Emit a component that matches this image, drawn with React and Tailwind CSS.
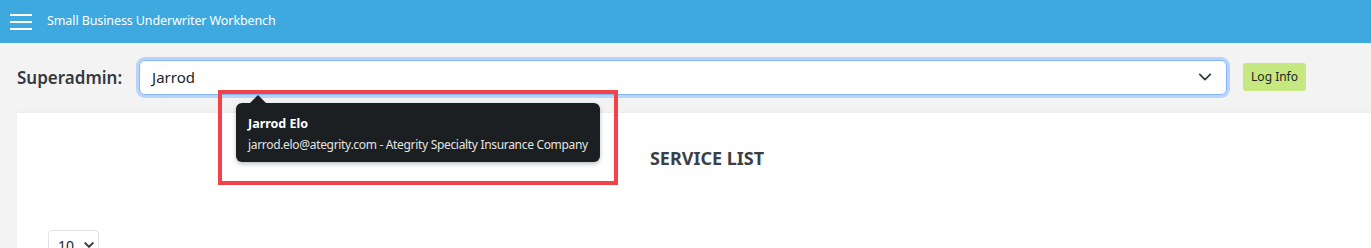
export default function App() {
  const font = { fontFamily: '"Segoe UI", "Noto Sans", "Open Sans", sans-serif' };
  return (
    <div className="w-[1371px] h-[248px] overflow-hidden bg-[#f3f3f3] relative" style={font}>
      <header className="h-[43px] bg-[#3da9de] flex items-center">
        <div className="ml-[10px] w-[22px] flex flex-col gap-[5px]">
          <span className="block h-[2px] bg-white" />
          <span className="block h-[2px] bg-white" />
          <span className="block h-[2px] bg-white" />
        </div>
        <span className="ml-[15px] text-[12.5px] tracking-[-0.1px] text-white leading-none">Small Business Underwriter Workbench</span>
      </header>

      <div className="flex items-center h-[70px] pb-[2px]">
        <label className="ml-[17px] text-[17px] font-semibold text-[#343a40] leading-none">Superadmin:</label>
        <div className="ml-[17px] w-[1088px] h-[35px] bg-white rounded-[6px] border border-[#86b7fe] shadow-[0_0_0_3px_#b9d4f8] flex items-center justify-between px-[12px]">
          <span className="text-[15px] text-[#212529]">Jarrod</span>
          <svg width="14" height="14" viewBox="0 0 16 16" className="mr-[2px]">
            <path d="M2 5l6 6 6-6" fill="none" stroke="#343a40" strokeWidth="2" strokeLinecap="round" strokeLinejoin="round" />
          </svg>
        </div>
        <button className="ml-[16px] h-[28px] px-[8px] bg-[#c5e880] rounded-[3px] text-[12px] text-[#212529]">Log Info</button>
      </div>

      <div className="ml-[17px] w-[1380px] h-[200px] bg-white shadow-[0_-1px_3px_rgba(0,0,0,0.04)] pt-[32px]">
        <div className="text-center text-[18px] font-bold text-[#3b3f45]">SERVICE LIST</div>
        <div className="mt-[58px] ml-[31px] w-[51px] h-[30px] border border-[#dee2e6] rounded-[4px] flex items-center pl-[9px] text-[14px] text-[#212529] gap-[9px]">
          <span>10</span>
          <svg width="12" height="12" viewBox="0 0 16 16">
            <path d="M3 5.5l5 5 5-5" fill="none" stroke="#343a40" strokeWidth="2.6" strokeLinecap="round" strokeLinejoin="round" />
          </svg>
        </div>
      </div>

      <div className="absolute left-[236px] top-[103px] w-[364px] h-[59px] bg-[#1b1f22] rounded-[6px] shadow-[0_2px_4px_rgba(0,0,0,0.25)] px-[12px] pt-[12px]">
        <div className="absolute left-[14px] -top-[8px] w-0 h-0 border-l-[8px] border-r-[8px] border-b-[8px] border-l-transparent border-r-transparent border-b-[#1b1f22]" />
        <div className="text-[12.5px] font-bold text-white leading-[18px]">Jarrod Elo</div>
        <div className="text-[12px] tracking-[-0.32px] text-[#e4e4e4] leading-[18px] mt-[3px] whitespace-nowrap">jarrod.elo@ategrity.com - Ategrity Specialty Insurance Company</div>
      </div>

      <div className="absolute left-[218px] top-[90px] w-[400px] h-[95px] border-[4px] border-[#f2424a] pointer-events-none" />
    </div>
  );
}
